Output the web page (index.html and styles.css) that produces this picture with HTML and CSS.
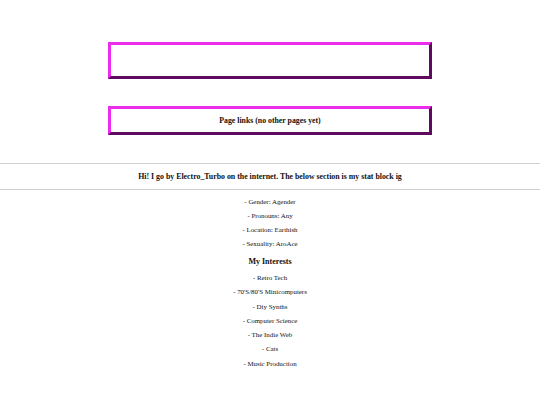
FILE: index.html
```html
<!DOCTYPE html>
<html>
<head>
<meta charset="utf-8">
<link rel="stylesheet" href="styles.css">
</head>
<body>
<div class="page">
  <div class="box box-header"></div>
  <div class="box box-links">Page links (no other pages yet)</div>
  <div class="intro">Hi! I go by Electro_Turbo on the internet. The below section is my stat block ig</div>
  <div class="stats">
    <p class="item">- Gender: Agender</p>
    <p class="item">- Pronouns: Any</p>
    <p class="item">- Location: Earthish</p>
    <p class="item">- Sexuality: AroAce</p>
  </div>
  <h2 class="heading">My Interests</h2>
  <div class="interests">
    <p class="item">- Retro Tech</p>
    <p class="item">- 70'S/80'S Minicomputers</p>
    <p class="item">- Diy Synths</p>
    <p class="item">- Computer Science</p>
    <p class="item">- The Indie Web</p>
    <p class="item">- Cats</p>
    <p class="item">- Music Production</p>
  </div>
</div>
</body>
</html>
```

FILE: styles.css
```css
html, body {
  margin: 0;
  padding: 0;
  background: #ffffff;
}
body {
  font-family: "Liberation Serif", "Times New Roman", serif;
  color: #111111;
}
.page {
  padding-top: 42px;
  text-align: center;
}
.box {
  width: 60%;
  margin: 0 auto;
  box-sizing: border-box;
  border-style: solid;
  border-width: 3px;
  border-color: #ec2cec #5e0a5e #5e0a5e #ec2cec;
  display: flex;
  align-items: center;
  justify-content: center;
  font-weight: bold;
  font-size: 7.8px;
}
.box-header {
  height: 37px;
}
.box-links {
  height: 29px;
  margin-top: 27px;
}
.intro {
  margin-top: 28px;
  height: 27px;
  box-sizing: border-box;
  border-top: 1px solid #cfcfcf;
  border-bottom: 1px solid #cfcfcf;
  display: flex;
  align-items: center;
  justify-content: center;
  font-weight: bold;
  font-size: 7.85px;
}
.stats {
  margin-top: 5px;
}
.item {
  margin: 0;
  font-size: 6.9px;
  line-height: 14px;
}
.heading {
  margin: 2px 0 0;
  font-size: 8px;
  line-height: 18px;
}
.interests .item {
  line-height: 14.3px;
}
```
